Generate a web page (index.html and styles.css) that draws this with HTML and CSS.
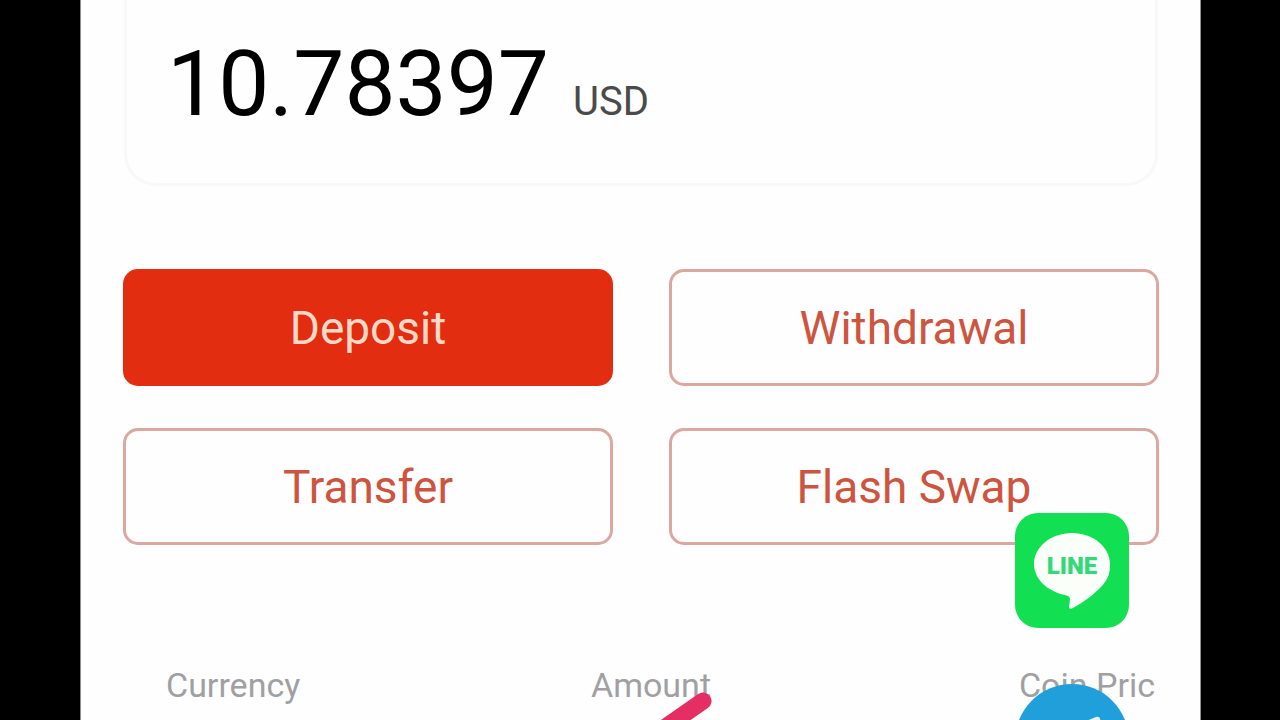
FILE: index.html
```html
<!DOCTYPE html>
<html lang="en">
<head>
<meta charset="utf-8">
<meta name="viewport" content="width=device-width, initial-scale=1">
<title>Wallet</title>
<link rel="stylesheet" href="styles.css">
</head>
<body>
<main class="screen">
  <section class="balance">
    <span class="amount">10.78397</span>
    <span class="unit">USD</span>
  </section>
  <div class="actions">
    <button class="btn primary" type="button">Deposit</button>
    <button class="btn" type="button">Withdrawal</button>
    <button class="btn" type="button">Transfer</button>
    <button class="btn" type="button">Flash Swap</button>
  </div>
  <table class="coins">
    <thead>
      <tr><th scope="col">Currency</th><th scope="col">Amount</th><th scope="col">Coin Pric</th></tr>
    </thead>
  </table>
  <svg class="slash" viewBox="0 0 80 40" aria-hidden="true"><path d="M63 11 20 41" stroke="#e52e63" stroke-width="17" stroke-linecap="round"/></svg>
  <nav class="contacts">
    <a href="#line" aria-label="LINE">
      <svg viewBox="0 0 114 115"><rect width="114" height="115" rx="23" fill="#12e052"/><path d="M57 20C36 20 19 34 19 51c0 15 13 27 31 31 4 1 5 2 5 5l-1 7c0 2 2 2 4 1 11-6 26-17 32-26 4-5 5-11 5-18 0-17-17-31-38-31Z" fill="#fbfffa"/><text class="line-word" x="57" y="61" text-anchor="middle">LINE</text></svg>
    </a>
    <a href="#telegram" aria-label="Telegram">
      <svg viewBox="0 0 114 114"><circle cx="57" cy="57" r="57" fill="#209fda"/><path d="M24 56 81 33c3-1 5 1 4 5l-9 44c-1 4-4 4-7 2L54 73l-8 8-3-17Z" fill="#e4f5fc"/></svg>
    </a>
  </nav>
</main>
</body>
</html>
```
FILE: styles.css
```css
* { box-sizing: border-box; }
body {
  margin: 0;
  padding: 0 79px 0 80px;
  background: #000;
  font-family: Roboto, "Liberation Sans", sans-serif;
  height: 100vh;
  overflow: hidden;
}
.screen {
  position: relative;
  height: 100%;
  padding: 0 41px 0 42px;
  background: #fefefe;
  border: solid #909090;
  border-width: 0 1px;
  overflow: hidden;
}
.balance {
  display: flex;
  align-items: baseline;
  gap: 24px;
  margin: 0 1px;
  padding: 30px 40px 45px;
  border: solid #f8f8f8;
  border-width: 0 3px 3px;
  border-radius: 0 0 32px 32px;
}
.amount { font-size: 91px; line-height: 108px; color: #000; }
.unit { font-size: 40px; line-height: 48px; color: #4a4a4a; }
.actions {
  display: grid;
  grid-template-columns: 1fr 1fr;
  gap: 42px 56px;
  margin-top: 83px;
}
.btn {
  height: 117px;
  padding: 0;
  border: 3px solid #dba79e;
  border-radius: 15px;
  background: #fefefe;
  color: #cd5540;
  font: 46px/54px Roboto, "Liberation Sans", sans-serif;
}
.primary { background: #e22d10; border-color: #e22d10; color: #ffd9c8; }
.coins {
  width: 100%;
  margin-top: 120px;
  border-collapse: collapse;
  table-layout: fixed;
  color: #a0a0a3;
  font-size: 34px;
  line-height: 40px;
}
.coins th { padding: 0; font-weight: 400; text-align: center; }
.coins th:first-child { padding-left: 43px; text-align: left; }
.coins th:nth-child(2) { padding-left: 20px; }
.coins th:last-child { text-align: right; padding-right: 4px; }
.slash {
  position: absolute;
  left: 559px;
  bottom: -10px;
  width: 80px;
  height: 40px;
}
.contacts {
  position: absolute;
  top: 513px;
  right: 71px;
  display: grid;
  gap: 56px;
  width: 114px;
}
.contacts a, .contacts svg { display: block; }
.line-word { font: 900 24px Roboto, "Liberation Sans", sans-serif; fill: #35d878; }
```
